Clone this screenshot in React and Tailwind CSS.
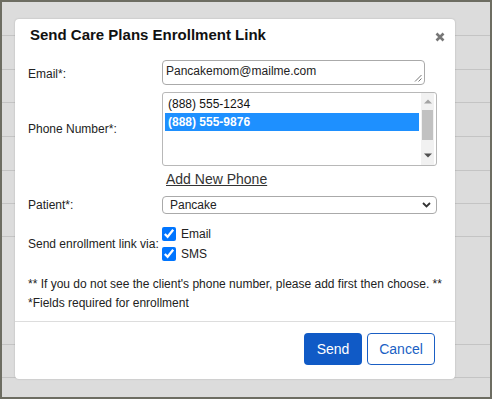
import React from "react";

const font = { fontFamily: '"Liberation Sans", Arial, sans-serif' };

function BackdropRows() {
  const rows = [34, 34, 33, 34, 34, 33, 33, 108, 33];
  return (
    <div className="flex flex-col">
      {rows.map((h, i) => (
        <div key={i} className="border-b border-[#c4c4c4]" style={{ height: h }} />
      ))}
    </div>
  );
}

function Listbox() {
  return (
    <div className="flex h-[74px] w-[275px] overflow-hidden rounded-[3px] border border-[#b8b8b8] bg-white">
      <div className="flex-1 overflow-hidden pl-[2px] pr-[2px] pt-[2px]">
        <div className="h-[18px] pl-[3px] text-[12px] leading-[18px] text-[#111]">(888) 555-1234</div>
        <div className="h-[18px] bg-[#1e90ff] pl-[3px] text-[12px] font-bold leading-[18px] text-white">
          (888) 555-9876
        </div>
        <div className="h-[30px]" />
        <div className="h-[18px] pl-[3px] text-[12px] leading-[18px] text-[#111]">(888) 555-0000</div>
      </div>
      <div className="mr-[2px] flex w-[13px] flex-col items-center bg-[#f1f1f1]">
        <svg width="8" height="5" viewBox="0 0 8 5" className="mt-[6px]">
          <path d="M0 4.5 L4 0.5 L8 4.5 Z" fill="#a3a3a3" />
        </svg>
        <div className="mt-[6px] h-[30px] w-[11px] bg-[#c1c1c1]" />
        <div className="flex-1" />
        <svg width="8" height="5" viewBox="0 0 8 5" className="mb-[7px]">
          <path d="M0 0.5 L4 4.5 L8 0.5 Z" fill="#505050" />
        </svg>
      </div>
    </div>
  );
}

export default function App() {
  return (
    <div
      className="relative h-[399px] w-[492px] overflow-hidden border-2 border-[#6d6d62] bg-[#dcdcdc]"
      style={font}
    >
      <BackdropRows />

      <div className="absolute left-[13px] top-[17px] flex h-[360px] w-[440px] flex-col rounded-[4px] bg-white shadow-[0_0_2px_rgba(0,0,0,0.2)]">
        <div className="flex items-start justify-between pl-[15px] pr-[10px] pt-[6px]">
          <h2 className="text-[15px] font-bold leading-[20px] text-[#111]">Send Care Plans Enrollment Link</h2>
          <svg width="10" height="10" viewBox="0 0 10 10" className="mt-[7px]">
            <path d="M1.5 1.5 L8.5 8.5 M8.5 1.5 L1.5 8.5" stroke="#777" strokeWidth="2.6" />
          </svg>
        </div>

        <div className="mt-[15px] grid grid-cols-[134px_1fr] items-center pl-[13px] text-[12px] text-[#222]">
          <div className="pt-[3px]">Email*:</div>
          <div className="relative h-[25px] w-[263px] rounded-[4px] border border-[#aaa] pl-[3px] pt-[3px] leading-[14px]">
            Pancakemom@mailme.com
            <svg width="8" height="8" viewBox="0 0 8 8" className="absolute bottom-[2px] right-[2px]">
              <path d="M7.5 1 L1 7.5 M7.5 4.5 L4.5 7.5" stroke="#777" strokeWidth="1" />
            </svg>
          </div>

          <div className="mt-[7px]">Phone Number*:</div>
          <div className="mt-[7px]">
            <Listbox />
          </div>

          <div />
          <div className="mt-[5px] pl-[4px]">
            <a className="text-[14px] leading-[16px] text-[#333] underline">Add New Phone</a>
          </div>

          <div className="mt-[7px]">Patient*:</div>
          <div className="mt-[7px] flex h-[18px] w-[275px] items-center justify-between rounded-[4px] border border-[#aaa] pl-[7px] pr-[5px]">
            <span>Pancake</span>
            <svg width="9" height="6" viewBox="0 0 9 6">
              <path d="M1 1 L4.5 4.5 L8 1" stroke="#333" strokeWidth="1.8" fill="none" />
            </svg>
          </div>

          <div className="mt-[13px]">Send enrollment link via:</div>
          <div className="mt-[13px] flex flex-col gap-[6px]">
            <label className="flex h-[14px] items-center gap-[5px] leading-[14px]">
              <input type="checkbox" defaultChecked className="m-0 h-[14px] w-[14px]" />
              <span>Email</span>
            </label>
            <label className="flex h-[14px] items-center gap-[5px] leading-[14px]">
              <input type="checkbox" defaultChecked className="m-0 h-[14px] w-[14px]" />
              <span>SMS</span>
            </label>
          </div>
        </div>

        <div className="mt-[14px] pl-[13px] text-[12px] leading-[19px] text-[#222]">
          <p>** If you do not see the client's phone number, please add first then choose. **</p>
          <p>*Fields required for enrollment</p>
        </div>

        <div className="mt-[8px] border-t border-[#ddd]" />

        <div className="flex justify-end gap-[5px] pr-[20px] pt-[11px]">
          <button className="h-[32px] w-[58px] rounded-[4px] bg-[#105ac6] text-[14px] text-white">Send</button>
          <button className="h-[32px] w-[68px] rounded-[4px] border border-[#1a5fc4] bg-white text-[14px] text-[#1a5fc4]">
            Cancel
          </button>
        </div>
      </div>
    </div>
  );
}
